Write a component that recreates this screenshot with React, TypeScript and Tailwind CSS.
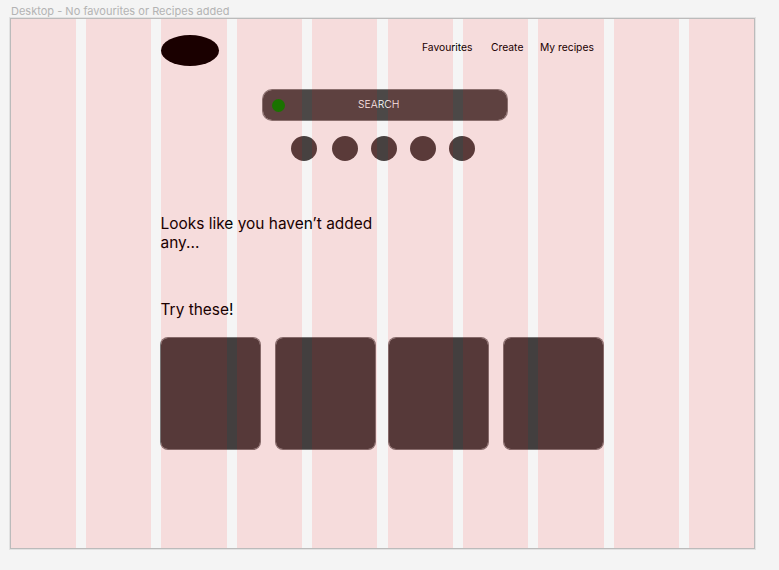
const columns = Array.from({ length: 10 }, (_, i) => i);
const filters = ["ml-0", "ml-[15px]", "ml-[13px]", "ml-[13px]", "ml-[13px]"];
const recipes = ["ml-0", "ml-[14px]", "ml-[12px]", "ml-[14px]"];

function GridOverlay() {
  return (
    <div className="pointer-events-none absolute inset-0 grid grid-cols-[65px_65px_66px_65px_66px_65px_65px_66px_65px_65px] gap-[10px]">
      {columns.map((i) => (
        <div key={i} className={i === 4 ? "w-[65px] bg-[#ff0000]/10" : "bg-[#ff0000]/10"} />
      ))}
    </div>
  );
}

export default function App() {
  return (
    <div className="h-[570px] w-[779px] overflow-hidden bg-[#f4f4f4] pl-[10px] font-['Inter',sans-serif] text-black">
      <div className="h-[18px] whitespace-nowrap pl-px pt-[3px] text-[11px] leading-4 tracking-[0.001em] text-[#b3b3b3]">
        Desktop - No favourites or Recipes added
      </div>
      <div className="relative h-[531px] w-[745px] border border-[#bbbbbb] bg-[#f5f5f5] shadow-[0_0_0_1px_#e2e2e2]">
        <main className="flex h-full flex-col pl-[149px]">
          <header className="flex h-[70px] items-start pt-4">
            <div className="ml-px h-[31px] w-[58px] rounded-[50%] bg-black" />
            <nav className="ml-[203px] flex pt-[4px] text-[10.3px] leading-4 whitespace-nowrap">
              <a className="w-[69px]">Favourites</a>
              <a className="w-[49px]">Create</a>
              <a>My recipes</a>
            </nav>
          </header>
          <div className="ml-[102px] flex h-8 w-[246px] items-center rounded-[10px] border border-[#4c4847]/70 bg-[#4c4847] bg-clip-padding pl-[9px]">
            <div className="size-[13px] rounded-full bg-[#008000]" />
            <span className="ml-[73px] pb-0.5 text-[10.35px] font-light leading-4 text-white">SEARCH</span>
          </div>
          <div className="ml-[131px] mt-[15px] flex">
            {filters.map((gap, i) => (
              <div key={i} className={`h-[25px] w-[26px] rounded-[50%] bg-[#474140] ${gap}`} />
            ))}
          </div>
          <h2 className="mt-[53px] w-[230px] pl-[0.5px] text-[15.45px] leading-[19px]">Looks like you haven’t added any...</h2>
          <h2 className="mt-[48px] pl-[0.5px] text-[15.45px] leading-[19px]">Try these!</h2>
          <div className="mt-[18px] flex">
            {recipes.map((gap, i) => (
              <div key={i} className={`h-[113px] w-[101px] rounded-[8px] border border-[#433f3f]/70 bg-[#433f3f] bg-clip-padding ${gap}`} />
            ))}
          </div>
        </main>
        <GridOverlay />
      </div>
    </div>
  );
}
